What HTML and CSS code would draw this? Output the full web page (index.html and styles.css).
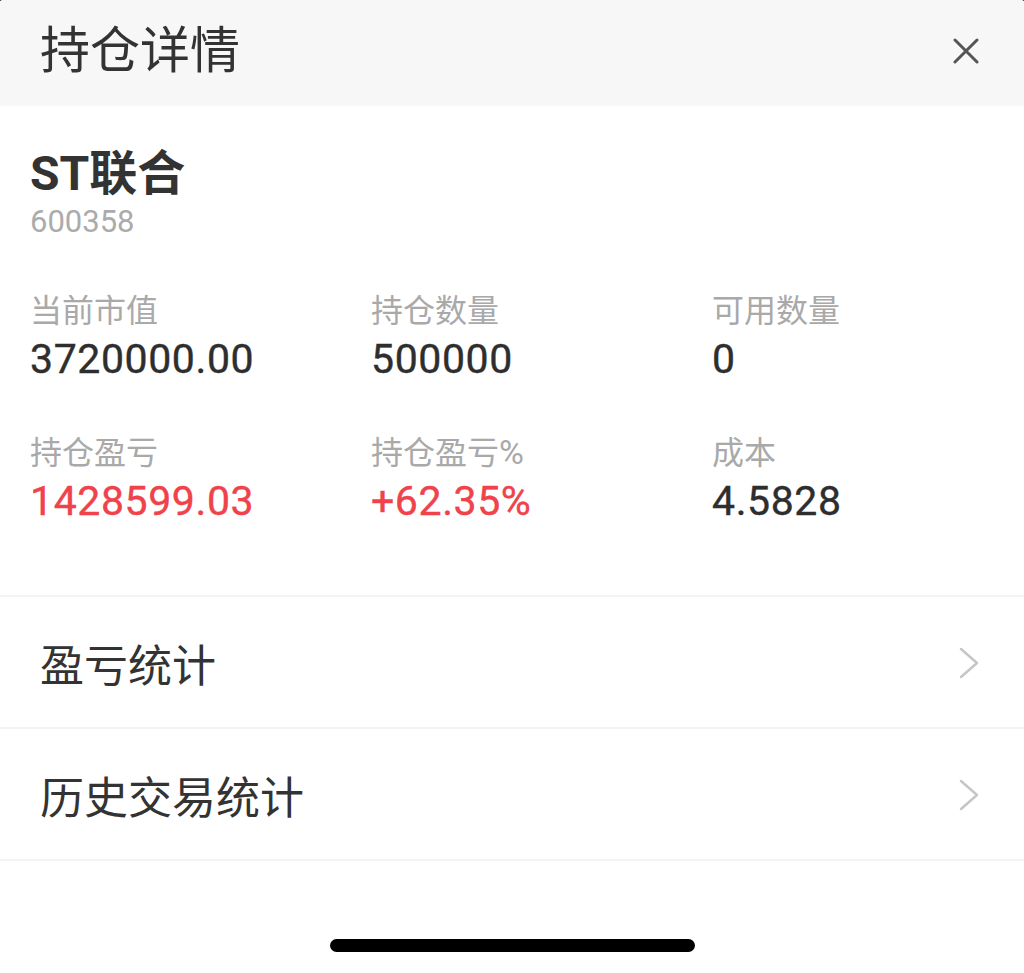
FILE: index.html
```html
<!DOCTYPE html>
<html>
  <head>
    <title>持仓详情</title>
    <meta charset="UTF-8">
    <link rel="stylesheet" href="styles.css">
  </head>
  <body>
    <div class="sheet">
      <header class="topbar">
        <span class="title">持仓详情</span>
        <svg class="close" width="26" height="26" viewBox="0 0 26 26">
          <path d="M2 2L24 24M24 2L2 24" stroke="#555" stroke-width="3" stroke-linecap="round" fill="none"/>
        </svg>
      </header>

      <section class="info">
        <div class="name">ST联合</div>
        <div class="code">600358</div>
        <div class="stats">
          <div class="stat">
            <div class="label">当前市值</div>
            <div class="value">3720000.00</div>
          </div>
          <div class="stat">
            <div class="label">持仓数量</div>
            <div class="value">500000</div>
          </div>
          <div class="stat">
            <div class="label">可用数量</div>
            <div class="value">0</div>
          </div>
          <div class="stat">
            <div class="label">持仓盈亏</div>
            <div class="value up">1428599.03</div>
          </div>
          <div class="stat">
            <div class="label">持仓盈亏<span class="pct">%</span></div>
            <div class="value up">+62.35%</div>
          </div>
          <div class="stat">
            <div class="label">成本</div>
            <div class="value">4.5828</div>
          </div>
        </div>
      </section>

      <div class="row">
        <span>盈亏统计</span>
        <svg class="chev" width="20" height="32" viewBox="0 0 20 32">
          <path d="M2 2L18 16L2 30" stroke="#c6c6c6" stroke-width="2.5" stroke-linecap="round" stroke-linejoin="round" fill="none"/>
        </svg>
      </div>
      <div class="row">
        <span>历史交易统计</span>
        <svg class="chev" width="20" height="32" viewBox="0 0 20 32">
          <path d="M2 2L18 16L2 30" stroke="#c6c6c6" stroke-width="2.5" stroke-linecap="round" stroke-linejoin="round" fill="none"/>
        </svg>
      </div>

      <div class="homebar"></div>
    </div>
  </body>
</html>
```

FILE: styles.css
```css
html {
  background: black;
}
body {
  margin: 0;
  background: black;
  overflow: hidden;
  font-family: Roboto, "Noto Sans CJK SC", sans-serif;
  color: #333;
}
.sheet {
  margin: 0 -4px;
  padding: 0 4px;
  min-height: 100vh;
  background: white;
  border-radius: 8px 8px 0 0;
  overflow: hidden;
}
.topbar {
  height: 106px;
  background: #f7f7f7;
  display: flex;
  align-items: center;
  justify-content: space-between;
  padding: 0 45px 4px 40px;
  box-sizing: border-box;
}
.title {
  font-size: 50px;
  line-height: 56px;
  color: #333;
}
.info {
  padding: 41px 30px 70px;
  border-bottom: 2px solid #f3f3f3;
}
.name {
  font-size: 48px;
  line-height: 54px;
  font-weight: bold;
  color: #333;
}
.code {
  margin-top: 3px;
  font-size: 31px;
  line-height: 36px;
  color: #ababab;
}
.stats {
  margin-top: 53px;
  display: grid;
  grid-template-columns: repeat(3, 341px);
  row-gap: 52px;
}
.label {
  font-size: 32px;
  line-height: 36px;
  color: #a9a9a9;
}
.label .pct {
  font-size: 34px;
  line-height: 30px;
}
.value {
  margin-top: 6px;
  font-size: 41px;
  line-height: 48px;
  letter-spacing: 0.6px;
  color: #2e2e2e;
  -webkit-text-stroke: 0.4px currentColor;
}
.value.up {
  color: #f0424a;
}
.row {
  height: 128px;
  border-bottom: 2px solid #f3f3f3;
  display: flex;
  align-items: center;
  justify-content: space-between;
  padding: 2px 45px 0 40px;
  font-size: 44px;
  color: #333;
}
.homebar {
  width: 365px;
  height: 13px;
  margin: 78px auto 0;
  background: black;
  border-radius: 7px;
}
```
